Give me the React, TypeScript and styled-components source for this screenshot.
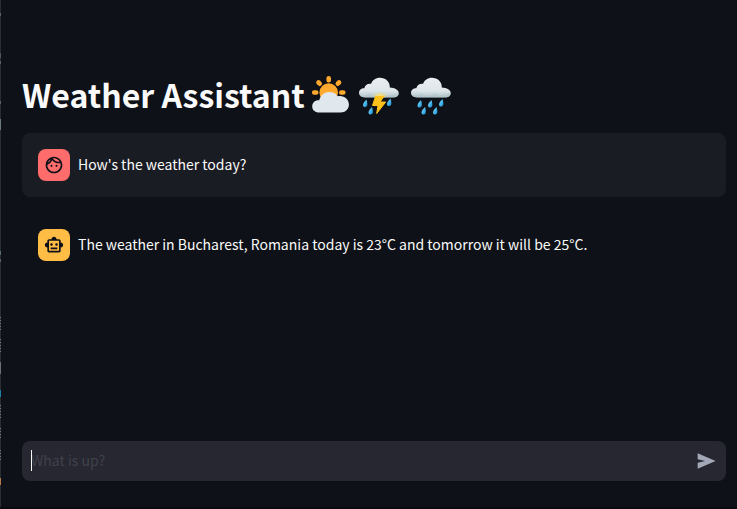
import React, { useState } from "react";
import styled, { createGlobalStyle } from "styled-components";
import { MdOutlineFace, MdOutlineSmartToy } from "react-icons/md";

const GlobalStyle = createGlobalStyle`
  *, *::before, *::after { box-sizing: border-box; }
  body {
    margin: 0;
    background: #0e1117;
    color: #fafafa;
    font-family: "Noto Sans CJK SC", "Noto Sans", sans-serif;
    font-size: 14px;
    line-height: 24px;
  }
`;

const Page = styled.div`
  display: flex;
  min-height: 100vh;
  border-bottom: 2px solid #090b10;
`;

const Edge = styled.div`
  flex: none;
  width: 1px;
  background:
    linear-gradient(#5a6468, #5a6468) 0 13px / 1px 3px no-repeat,
    linear-gradient(#4d5a60, #4d5a60) 0 53px / 1px 5px no-repeat,
    linear-gradient(#5a6468, #5a6468) 0 61px / 1px 3px no-repeat,
    linear-gradient(#5a6468, #5a6468) 0 101px / 1px 3px no-repeat,
    linear-gradient(#6c7a7c, #6c7a7c) 0 119px / 1px 11px no-repeat,
    linear-gradient(#5a6f74, #5a6f74) 0 251px / 1px 4px no-repeat,
    linear-gradient(#5a6468, #5a6468) 0 259px / 1px 3px no-repeat,
    repeating-linear-gradient(#747a7c 0 1px, #33373a 1px 3px) 0 317px / 1px 13px no-repeat,
    repeating-linear-gradient(#747a7c 0 1px, #33373a 1px 3px) 0 339px / 1px 13px no-repeat,
    linear-gradient(#6c7274, #6c7274) 0 362px / 1px 12px no-repeat,
    linear-gradient(#1e7ea8, #1e7ea8) 0 390px / 1px 7px no-repeat,
    repeating-linear-gradient(#747a7c 0 1px, #33373a 1px 3px) 0 405px / 1px 13px no-repeat,
    repeating-linear-gradient(#747a7c 0 1px, #33373a 1px 3px) 0 428px / 1px 10px no-repeat,
    repeating-linear-gradient(#747a7c 0 1px, #33373a 1px 3px) 0 450px / 1px 10px no-repeat,
    linear-gradient(#b27a48, #b27a48) 0 478px / 1px 7px no-repeat,
    #2b2e31;
`;

const Main = styled.main`
  flex: 1;
  min-width: 0;
  display: flex;
  flex-direction: column;
  padding: 69px 11px 26px 21px;
`;

const Heading = styled.header`
  display: flex;
  align-items: center;
  gap: 6px;
  height: 54px;
  margin-bottom: 10px;
`;

const Title = styled.h1`
  margin: 0;
  padding-bottom: 4px;
  font-size: 32px;
  font-weight: 700;
  line-height: 50px;
  white-space: nowrap;
`;

const Emojis = styled.span`
  display: flex;
  gap: 8px;
`;

const EmojiArt = styled.svg`
  width: 44px;
  height: 44px;
  display: block;
`;

const SunArt = styled(EmojiArt)`
  width: 38px;
`;

const Messages = styled.section`
  display: flex;
  flex-direction: column;
  gap: 16px;
`;

const Message = styled.article<{ $filled?: boolean }>`
  display: flex;
  align-items: center;
  gap: 8px;
  padding: 16px;
  border-radius: 8px;
  background: ${(p) => (p.$filled ? "#1a1c24" : "transparent")};
`;

const Avatar = styled.span<{ $color: string }>`
  flex: none;
  display: grid;
  place-items: center;
  width: 32px;
  height: 32px;
  border-radius: 8px;
  background: ${(p) => p.$color};
  color: #0e1117;
`;

const MessageText = styled.p`
  margin: 0;
  padding-bottom: 2px;
`;

const Composer = styled.form`
  display: flex;
  align-items: center;
  height: 40px;
  margin-top: auto;
  border-radius: 8px;
  background: #262730;
`;

const Field = styled.div`
  position: relative;
  flex: 1;
  display: flex;
`;

const Input = styled.input`
  width: 100%;
  height: 40px;
  padding: 0 9px 2px;
  border: 0;
  outline: 0;
  background: transparent;
  color: inherit;
  font: inherit;
  &::placeholder { color: #40424c; opacity: 1; }
`;

const Caret = styled.span`
  position: absolute;
  left: 9px;
  top: 9px;
  width: 1px;
  height: 21px;
  background: #fafafa;
  pointer-events: none;
`;

const SendButton = styled.button`
  display: grid;
  place-items: center;
  width: 40px;
  height: 40px;
  padding: 0;
  border: 0;
  background: transparent;
  color: #a3a8b8;
`;

const SendIcon = styled.svg`
  width: 20px;
  height: 20px;
  fill: currentColor;
`;

const cloud =
  "M8 21.5C4.5 21.5 2 19.6 2 16.8c0-2.8 2.6-4.7 5.3-4.5.6-3.3 3.4-5 6.8-4.5C15.4 4.2 18.7 1.8 22.8 1.8c6 0 10.2 4.2 10 9.7 5 .2 9 2.6 9 5.7 0 2.7-2.5 4.3-5.8 4.3z";
const drop =
  "M3.5 0C2.2 1.6 0 3.6 0 5.4 0 6.8 1 7.6 2.1 7.6 3.6 7.6 4.4 6.4 4.4 4.8 4.4 3 3.9 1.4 3.5 0z";

function SunCloud() {
  return (
    <SunArt viewBox="1 0 38 44" role="img" aria-label="Sun behind cloud">
      <g stroke="#ffa92e" strokeWidth="4.6" strokeLinecap="round">
        <path d="M18.7 4.3v2M8.5 8.5l1.2 1.2M29 8.5l-1.2 1.2M4.2 18.5h2M33.3 18.5h-2" />
      </g>
      <circle cx="18.7" cy="18.5" r="9.3" fill="#ffa92e" />
      <path
        d="M7.7 38.5a5.9 5.9 0 0 1-5.5-6c0-3.9 3-6.7 7-6.3 1.4-4.8 5-8.1 10.2-8.1 3.7 0 6.3 1.5 8.1 4.1 6.6-1.2 11.4 2.8 11.4 8.3 0 4.6-3.5 8-8.3 8z"
        fill="#e1e8ed"
      />
    </SunArt>
  );
}

function RainCloud({ storm }: { storm?: boolean }) {
  const id = storm ? "storm" : "rain";
  const drops = storm
    ? [[6, 24.5], [11.5, 32], [30, 23.5]]
    : [[8.5, 25], [19, 25], [30, 24], [12.5, 32], [24, 32]];
  return (
    <EmojiArt viewBox="0 -1 44 44" role="img" aria-label={storm ? "Thunderstorm" : "Rain"}>
      <defs>
        <linearGradient id={`${id}-cloud`} x1="0" y1="0" x2="0" y2="1">
          <stop offset="0" stopColor="#e9eef0" />
          <stop offset=".65" stopColor="#dfe6e9" />
          <stop offset="1" stopColor="#b3c5cb" />
        </linearGradient>
        <linearGradient id={`${id}-drop`} x1="0" y1="0" x2="1" y2="1">
          <stop offset="0" stopColor="#8bdcfa" />
          <stop offset=".6" stopColor="#3fb2ea" />
          <stop offset="1" stopColor="#1a7dbe" />
        </linearGradient>
        <radialGradient id={`${id}-glow`}>
          <stop offset="0" stopColor="#ffe36a" />
          <stop offset="1" stopColor="#ffe36a" stopOpacity="0" />
        </radialGradient>
      </defs>
      <path d={cloud} transform="translate(0 1)" fill={`url(#${id}-cloud)`} />
      <path
        d="M2.5 19c4 2.5 7 1 9.5-.8 4 3.3 9.5 3 13.5 0 4.5 3 10 2.3 16-.7-.8 3-3.3 5-6.5 5H8c-2.7 0-4.8-1.3-5.5-3.5z"
        fill="#a9bfc6"
        opacity=".4"
      />
      {storm && <ellipse cx="23" cy="20.5" rx="8" ry="3.5" fill={`url(#${id}-glow)`} />}
      {drops.map(([x, y]) => (
        <path key={`${x}-${y}`} d={drop} transform={`translate(${x} ${y})`} fill={`url(#${id}-drop)`} />
      ))}
      {storm && (
        <path
          d="M18.5 21.5 15.5 30.5h5.500l-1.300 8 9-11.500h-5.500l3.500-5.500z"
          fill="#fcc21b"
          stroke="#fcc21b"
          strokeWidth="1"
          strokeLinejoin="round"
        />
      )}
    </EmojiArt>
  );
}

export default function App() {
  const [text, setText] = useState("");
  return (
    <>
      <GlobalStyle />
      <Page>
        <Edge />
        <Main>
          <Heading>
            <Title>Weather Assistant</Title>
            <Emojis>
              <SunCloud />
              <RainCloud storm />
              <RainCloud />
            </Emojis>
          </Heading>
          <Messages aria-label="Conversation">
            <Message $filled>
              <Avatar $color="#ff6c6c">
                <MdOutlineFace size={20} />
              </Avatar>
              <MessageText>How's the weather today?</MessageText>
            </Message>
            <Message>
              <Avatar $color="#ffbd45">
                <MdOutlineSmartToy size={20} />
              </Avatar>
              <MessageText>
                The weather in Bucharest, Romania today is 23°C and tomorrow it will be 25°C.
              </MessageText>
            </Message>
          </Messages>
          <Composer onSubmit={(e) => e.preventDefault()}>
            <Field>
              <Input
                aria-label="Message"
                placeholder="What is up?"
                value={text}
                onChange={(e) => setText(e.target.value)}
              />
              {text === "" && <Caret />}
            </Field>
            <SendButton type="submit" aria-label="Send message">
              <SendIcon viewBox="0 0 24 24" aria-hidden="true">
                <path d="M2 2.800 23.500 12 2 21.200V14.200L11 12 2 9.800z" />
              </SendIcon>
            </SendButton>
          </Composer>
        </Main>
      </Page>
    </>
  );
}
